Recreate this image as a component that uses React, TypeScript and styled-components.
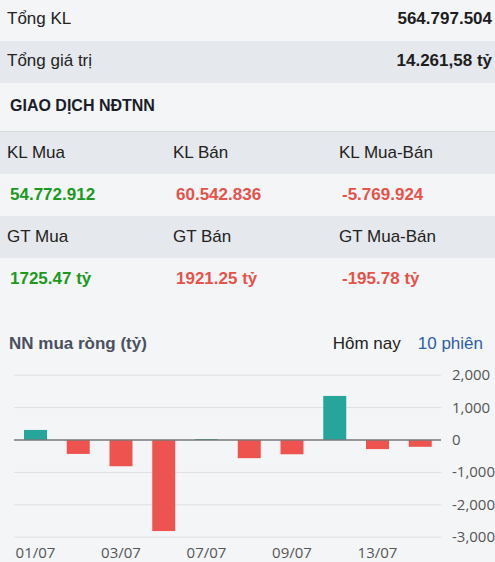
import { Fragment } from 'react';
import styled, { createGlobalStyle } from 'styled-components';

const GlobalStyle = createGlobalStyle`
  body {
    margin: 0;
    background: #f4f5f7;
    font-family: 'Liberation Sans', Arial, sans-serif;
    color: #222;
  }
`;

const green = '#1c9a1f';
const red = '#e5534b';

const summary = [
  { label: 'Tổng KL', value: '564.797.504' },
  { label: 'Tổng giá trị', value: '14.261,58 tỷ' },
];

const foreign = [
  [
    { label: 'KL Mua', value: '54.772.912', tone: 'up' },
    { label: 'KL Bán', value: '60.542.836', tone: 'down' },
    { label: 'KL Mua-Bán', value: '-5.769.924', tone: 'down' },
  ],
  [
    { label: 'GT Mua', value: '1725.47 tỷ', tone: 'up' },
    { label: 'GT Bán', value: '1921.25 tỷ', tone: 'down' },
    { label: 'GT Mua-Bán', value: '-195.78 tỷ', tone: 'down' },
  ],
];

const sessions = [
  { date: '01/07', value: 310 },
  { date: '02/07', value: -430 },
  { date: '03/07', value: -810 },
  { date: '06/07', value: -2810 },
  { date: '07/07', value: 30 },
  { date: '08/07', value: -560 },
  { date: '09/07', value: -440 },
  { date: '10/07', value: 1360 },
  { date: '13/07', value: -280 },
  { date: '14/07', value: -210 },
];

const ticks = [2000, 1000, 0, -1000, -2000, -3000];

const Page = styled.div`
  width: 495px;
  height: 562px;
  overflow: hidden;
`;

const SummaryRow = styled.div<{ $alt?: boolean }>`
  display: flex;
  justify-content: space-between;
  align-items: center;
  height: ${({ $alt }) => ($alt ? '42px' : '41px')};
  box-sizing: border-box;
  padding: 0 3px ${({ $alt }) => ($alt ? '3px' : '4px')} 7px;
  background: ${({ $alt }) => ($alt ? '#e5e8ec' : '#f4f5f7')};
  font-size: 17px;

  b {
    font-weight: 700;
    color: #1d1d1f;
  }
`;

const SectionTitle = styled.h3`
  margin: 0;
  height: 49px;
  padding: 0 10px 3px;
  display: flex;
  align-items: center;
  box-sizing: border-box;
  border-bottom: 1px solid #d7dade;
  font-size: 16px;
  font-weight: 700;
  color: #1b1d2a;
`;

const Grid = styled.div`
  display: grid;
  grid-template-columns: repeat(3, 166px);
`;

const Cell = styled.div<{ $head?: boolean; $tone?: string }>`
  height: 42px;
  display: flex;
  align-items: center;
  padding-left: ${({ $head }) => ($head ? '7px' : '10px')};
  background: ${({ $head }) => ($head ? '#e5e8ec' : '#f4f5f7')};
  font-size: 17px;
  font-weight: ${({ $head }) => ($head ? 400 : 700)};
  color: ${({ $tone }) => ($tone === 'up' ? green : $tone === 'down' ? red : '#222')};
`;

const ChartHead = styled.div`
  display: flex;
  align-items: center;
  height: 24px;
  padding: 32px 12px 0 9px;
  font-size: 17px;
`;

const ChartTitle = styled.span`
  flex: 1;
  font-weight: 700;
  color: #4a5060;
`;

const Tab = styled.span<{ $active?: boolean }>`
  margin-left: 17px;
  color: ${({ $active }) => ($active ? '#2d5ea8' : '#222')};
`;

const ChartSvg = styled.svg`
  display: block;
  margin-top: 8px;
  font-family: 'Open Sans', sans-serif;
`;

const BarChart = () => {
  const zeroY = 76;
  const scale = 32.4 / 1000;
  const step = 42.75;
  const barW = 23;
  return (
    <ChartSvg width={495} height={197}>
      {ticks.map(t => {
        const y = zeroY - t * scale;
        return (
          <g key={t}>
            {t !== 0 && <line x1={14} x2={441} y1={y} y2={y} stroke="#dddfe3" strokeWidth={1} />}
            <text x={452} y={y + 5} fontSize={15} fill="#555">
              {t.toLocaleString('en-US')}
            </text>
          </g>
        );
      })}
      {sessions.map((s, i) => {
        const x = 24 + i * step;
        const h = Math.max(Math.abs(s.value) * scale, 1);
        const y = s.value >= 0 ? zeroY - h : zeroY;
        return (
          <g key={s.date}>
            <rect x={x} y={y} width={barW} height={h} fill={s.value >= 0 ? '#26a69a' : '#ef5350'} />
            {i % 2 === 0 && (
              <text x={x + barW / 2} y={194} fontSize={15} fill="#555" textAnchor="middle">
                {s.date}
              </text>
            )}
          </g>
        );
      })}
      <line x1={14} x2={441} y1={zeroY} y2={zeroY} stroke="#777" strokeWidth={1.5} />
    </ChartSvg>
  );
};

const App = () => {
  return (
    <Page>
      <GlobalStyle />
      {summary.map((r, i) => (
        <SummaryRow key={r.label} $alt={i % 2 === 1}>
          <span>{r.label}</span>
          <b>{r.value}</b>
        </SummaryRow>
      ))}
      <SectionTitle>GIAO DỊCH NĐTNN</SectionTitle>
      <Grid>
        {foreign.map((group, gi) => (
          <Fragment key={gi}>
            {group.map(c => (
              <Cell key={c.label} $head>
                {c.label}
              </Cell>
            ))}
            {group.map(c => (
              <Cell key={c.label + '-v'} $tone={c.tone}>
                {c.value}
              </Cell>
            ))}
          </Fragment>
        ))}
      </Grid>
      <ChartHead>
        <ChartTitle>NN mua ròng (tỷ)</ChartTitle>
        <Tab>Hôm nay</Tab>
        <Tab $active>10 phiên</Tab>
      </ChartHead>
      <BarChart />
    </Page>
  );
};

export default App;
